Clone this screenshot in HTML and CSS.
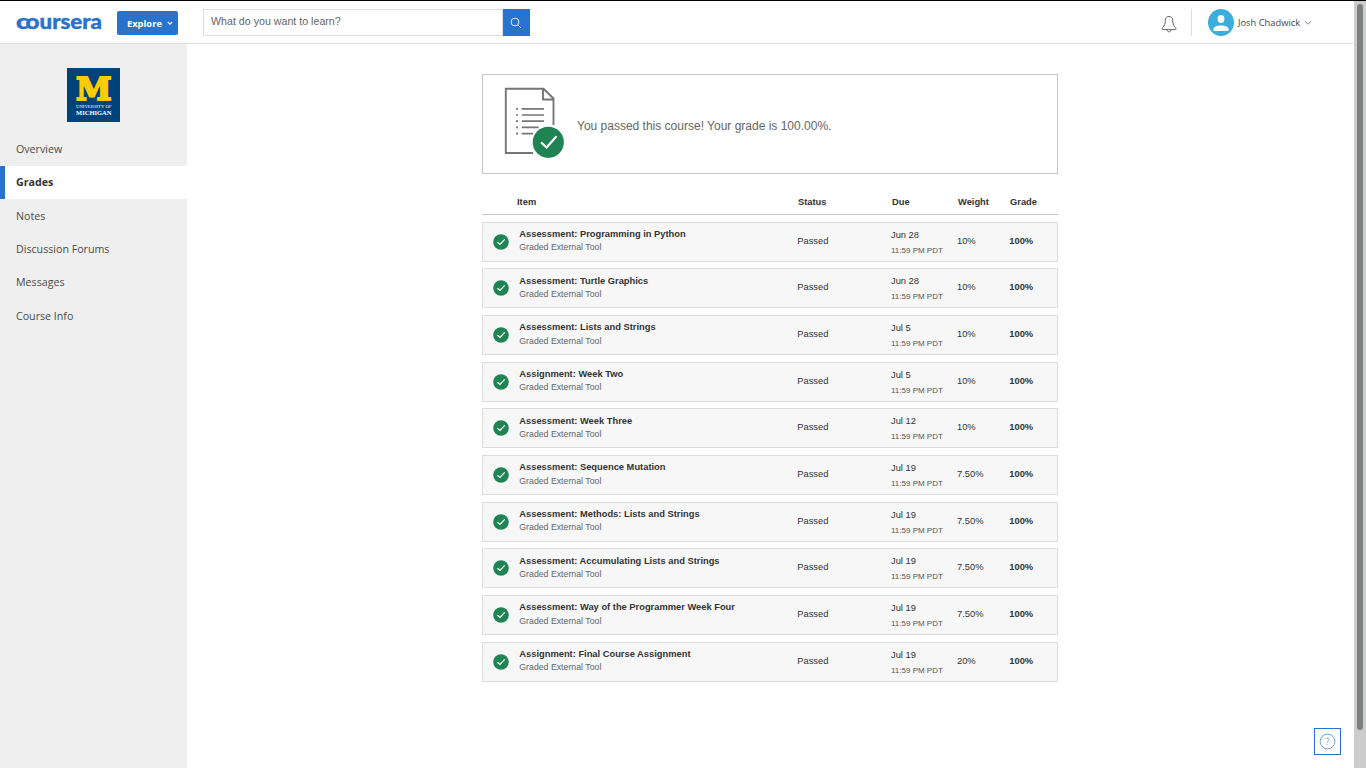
FILE: index.html
```html
<!DOCTYPE html>
<html lang="en">
<head>
<meta charset="utf-8">
<title>Grades | Coursera</title>
<link rel="stylesheet" href="styles.css">
</head>
<body>
<svg class="defs" aria-hidden="true">
  <symbol id="check" viewBox="0 0 16 16"><circle cx="8" cy="8" r="7.8" fill="#208354"/><path d="M4.4 8.2 7 10.5l4.7-5.1" fill="none" stroke="#fff" stroke-width="1.2"/></symbol>
</svg>
<div class="page">
  <div class="app">
    <header class="header">
      <svg class="logo" width="88" height="32" viewBox="0 -8 88 32" role="img" aria-label="coursera"><g class="logo-text"><text x="0" y="14.500" textLength="13" lengthAdjust="spacingAndGlyphs">c</text><text x="9.500" y="14.500" textLength="14" lengthAdjust="spacingAndGlyphs">o</text><text x="23.500" y="14.500" textLength="62.500" lengthAdjust="spacingAndGlyphs">ursera</text></g></svg>
      <button class="explore"><span class="explore-label">Explore</span><svg width="6" height="5" viewBox="0 0 6 5"><path d="M.8 1 3 3.200 5.200 1" fill="none" stroke="#fff" stroke-width="1.200"/></svg></button>
      <div class="search">
        <div class="search-field"><span class="search-text">What do you want to learn?</span></div>
        <button class="search-button"><svg width="12" height="12" viewBox="0 0 12 12"><circle cx="5" cy="5" r="3.900" fill="none" stroke="#fff" stroke-width=".85"/><path d="m7.800 7.800 3.200 3.200" stroke="#fff" stroke-width=".9"/></svg></button>
      </div>
      <svg class="bell" width="16" height="18" viewBox="0 0 16 18"><path d="M4.300 5.200C4.300 2.700 5.700 1.500 8 1.500s3.700 1.200 3.700 3.700c0 4 .8 5.300 2.700 7.300 1.100 1.100.8 2.100-.5 2.100H2.100c-1.300 0-1.600-1-.5-2.100 1.900-2 2.700-3.300 2.700-7.300ZM6 14.800c.2 1.300.9 2 2 2s1.800-.7 2-2" fill="none" stroke="#555" stroke-width=".9"/></svg>
      <div class="divider"></div>
      <div class="account">
        <svg width="26" height="27" viewBox="0 0 26 27"><ellipse cx="13" cy="13.500" rx="13" ry="13.500" fill="#3caedb"/><ellipse cx="13" cy="9.900" rx="3.400" ry="4" fill="#fff"/><path d="M5.500 22v-1.700c0-2.600 3.200-3.700 7.500-3.700s7.500 1.100 7.500 3.700V22Z" fill="#fff"/></svg>
        <span class="account-name">Josh Chadwick</span>
        <svg class="account-caret" width="8" height="6" viewBox="0 0 8 6"><path d="M1 1.200 4 4.300l3-3.100" fill="none" stroke="#555" stroke-width=".75"/></svg>
      </div>
    </header>
    <div class="body">
      <aside class="sidebar">
        <svg class="school" width="53" height="54" viewBox="0 0 53 54"><path d="M0 0h53v54H0z" fill="#00437a"/><text class="block-m" x="9" y="32.300" textLength="35.500" lengthAdjust="spacingAndGlyphs">M</text><text class="school-small" x="9" y="40" textLength="35.500" lengthAdjust="spacingAndGlyphs">UNIVERSITY OF</text><text class="school-name" x="9" y="46.800" textLength="35.500" lengthAdjust="spacingAndGlyphs">MICHIGAN</text></svg>
        <nav class="nav">
          <a class="nav-item">Overview</a>
          <a class="nav-item active">Grades</a>
          <a class="nav-item">Notes</a>
          <a class="nav-item">Discussion Forums</a>
          <a class="nav-item">Messages</a>
          <a class="nav-item">Course Info</a>
        </nav>
      </aside>
      <main class="main">
        <section class="summary">
          <svg class="summary-icon" width="60" height="72" viewBox="0 0 60 72"><path d="M29 66H1.800V1.800H39.500l10 9.700V38M39 1.800v10.700h10.500" fill="none" stroke="#757575" stroke-width="1.900"/><path d="M17.800 21.900H40M17.800 28H40M17.800 34.200H40M17.800 40.400h16.800M17.800 46.600H29" stroke="#757575" stroke-width="1.700"/><path d="M12 21.900h2M12 28h2M12 34.200h2M12 40.400h2M12 46.600h2" stroke="#757575" stroke-width="1.700"/><circle cx="44.300" cy="55.300" r="15.600" fill="#208354"/><path d="m37 55.300 5.600 5.200 9.900-11.200" fill="none" stroke="#fff" stroke-width="2.200"/></svg>
          <p class="summary-text">You passed this course! Your grade is 100.00%.</p>
        </section>
        <div class="columns head"><span></span><span class="h-item">Item</span><span class="h-status">Status</span><span class="h-due">Due</span><span class="h-weight">Weight</span><span class="h-grade">Grade</span></div>
        <div class="rows">
          <div class="columns row"><svg class="check"><use href="#check"/></svg><div class="item"><b>Assessment: Programming in Python</b><small>Graded External Tool</small></div><span>Passed</span><div class="due">Jun 28<small>11:59 PM PDT</small></div><span>10%</span><b>100%</b></div>
          <div class="columns row"><svg class="check"><use href="#check"/></svg><div class="item"><b>Assessment: Turtle Graphics</b><small>Graded External Tool</small></div><span>Passed</span><div class="due">Jun 28<small>11:59 PM PDT</small></div><span>10%</span><b>100%</b></div>
          <div class="columns row"><svg class="check"><use href="#check"/></svg><div class="item"><b>Assessment: Lists and Strings</b><small>Graded External Tool</small></div><span>Passed</span><div class="due">Jul 5<small>11:59 PM PDT</small></div><span>10%</span><b>100%</b></div>
          <div class="columns row"><svg class="check"><use href="#check"/></svg><div class="item"><b>Assignment: Week Two</b><small>Graded External Tool</small></div><span>Passed</span><div class="due">Jul 5<small>11:59 PM PDT</small></div><span>10%</span><b>100%</b></div>
          <div class="columns row"><svg class="check"><use href="#check"/></svg><div class="item"><b>Assessment: Week Three</b><small>Graded External Tool</small></div><span>Passed</span><div class="due">Jul 12<small>11:59 PM PDT</small></div><span>10%</span><b>100%</b></div>
          <div class="columns row"><svg class="check"><use href="#check"/></svg><div class="item"><b>Assessment: Sequence Mutation</b><small>Graded External Tool</small></div><span>Passed</span><div class="due">Jul 19<small>11:59 PM PDT</small></div><span>7.50%</span><b>100%</b></div>
          <div class="columns row"><svg class="check"><use href="#check"/></svg><div class="item"><b>Assessment: Methods: Lists and Strings</b><small>Graded External Tool</small></div><span>Passed</span><div class="due">Jul 19<small>11:59 PM PDT</small></div><span>7.50%</span><b>100%</b></div>
          <div class="columns row"><svg class="check"><use href="#check"/></svg><div class="item"><b>Assessment: Accumulating Lists and Strings</b><small>Graded External Tool</small></div><span>Passed</span><div class="due">Jul 19<small>11:59 PM PDT</small></div><span>7.50%</span><b>100%</b></div>
          <div class="columns row"><svg class="check"><use href="#check"/></svg><div class="item"><b>Assessment: Way of the Programmer Week Four</b><small>Graded External Tool</small></div><span>Passed</span><div class="due">Jul 19<small>11:59 PM PDT</small></div><span>7.50%</span><b>100%</b></div>
          <div class="columns row"><svg class="check"><use href="#check"/></svg><div class="item"><b>Assignment: Final Course Assignment</b><small>Graded External Tool</small></div><span>Passed</span><div class="due">Jul 19<small>11:59 PM PDT</small></div><span>20%</span><b>100%</b></div>
        </div>
      </main>
    </div>
  </div>
  <div class="scrollbar"><div class="thumb"></div></div>
</div>
<button class="help" aria-label="Help"><svg width="17" height="17" viewBox="0 0 17 17"><circle cx="8.500" cy="8.500" r="7.400" fill="none" stroke="#6b9fe0" stroke-width="1"/><text class="help-mark" x="8.500" y="11.600" text-anchor="middle">?</text></svg></button>
</body>
</html>
```
FILE: styles.css
```css
* { box-sizing: border-box; }
body { margin: 0; overflow: hidden; background: #fff; color: #333; font-family: "Liberation Sans", Arial, sans-serif; font-size: 9.33px; }
button { padding: 0; border: 0; font: inherit; }
svg { display: block; flex: none; }
.defs { position: absolute; width: 0; height: 0; }
.page { display: flex; height: 768px; border-top: 1px solid #000; }
.app { flex: 1; display: flex; flex-direction: column; }
.header { display: flex; align-items: flex-start; height: 43px; border-bottom: 1px solid #ddd; padding-left: 16px; }
.logo { margin-top: 5px; overflow: visible; }
.logo-text { font: 900 20.500px Lato, sans-serif; fill: #2a73cc; stroke: #2a73cc; stroke-width: .4px; }
.explore { display: flex; align-items: center; gap: 5px; width: 61px; height: 24px; margin: 10px 0 0 13px; padding-left: 10px; border-radius: 2px; background: #2a73cc; color: #fff; font: bold 9.33px "Open Sans", sans-serif; }
.search { display: flex; margin: 8px 0 0 25px; }
.search-field { width: 300px; height: 27px; border: 1px solid #ddd; padding: 5px 7px; color: #666; font-size: 10.67px; line-height: 12px; }
.search-button { display: flex; align-items: center; justify-content: center; width: 27px; height: 27px; background: #2a73cc; padding-right: 1px; }
.bell { margin: 14px 0 0 631px; }
.divider { width: 1px; height: 27px; margin: 8px 0 0 14px; background: #ddd; }
.account { display: flex; align-items: center; margin: 8px 0 0 16px; color: #444; font: 9.33px "Open Sans", sans-serif; }
.account-name { margin-left: 4px; }
.account-caret { margin-left: 4px; }
.body { flex: 1; display: flex; }
.sidebar { width: 187px; background: #efefef; padding-top: 24px; }
.school { margin-left: 67px; }
.block-m { font: bold 32.500px "DejaVu Serif", serif; fill: #ffcb05; stroke: #ffcb05; stroke-width: 2px; }
.school-small { font: 5px "Liberation Serif", serif; fill: #fff; }
.school-name { font: bold 7px "Liberation Serif", serif; fill: #fff; }
.nav { margin-top: 10.67px; }
.nav-item { display: flex; align-items: center; height: 33.35px; padding: 0 0 .8px 16px; color: #4a4a4a; font: 10.67px "Open Sans", sans-serif; }
.nav-item.active { border-left: 5px solid #2a73cc; padding-left: 11px; background: #fff; color: #333; font-weight: bold; }
.main { width: 576px; margin-left: 295px; padding-top: 30px; }
.summary { display: flex; height: 100px; border: 1px solid #c7c7c7; padding: 12px 0 0 21px; }
.summary-text { margin: 32px 0 0 13px; color: #666; font-size: 12px; line-height: 14px; }
.columns { display: grid; grid-template-columns: 37px 278px 94px 66px 52px 1fr; }
.head { height: 41px; border-bottom: 1px solid #c7c7c7; padding-top: 22px; font-weight: bold; line-height: 12px; }
.h-item { margin-left: -2px; }
.h-status, .h-due, .h-weight, .h-grade { margin-left: 1px; }
.rows { display: flex; flex-direction: column; gap: 6.67px; padding-top: 6.67px; }
.row { height: 40px; border: 1px solid #ddd; background: #f7f7f7; line-height: 12px; grid-template-columns: 36.300px 278px 93.700px 66px 52.300px 1fr; }
.row > span, .row > b { padding-top: 12px; }
.check { width: 16px; height: 16px; margin: 11px 0 0 10px; }
.item { padding-top: 5.450px; }
.item b, .item small { display: block; }
.item small { color: #666; margin-top: 1.300px; font-size: 8.750px; }
.due { padding-top: 6px; }
.due small { display: block; margin-top: 4px; font-size: 8px; color: #555; }
.scrollbar { width: 12px; background: #cdcdcd; padding: 3px 3px 0; }
.thumb { width: 6px; height: 726px; border-radius: 3px; background: #7c8080; }
.help { position: fixed; left: 1314px; top: 728px; width: 27px; height: 27px; display: flex; align-items: center; justify-content: center; border: 1px solid #2a73cc; background: #fff; }
.help-mark { font: 9px "Open Sans", sans-serif; fill: #6b9fe0; }
```
